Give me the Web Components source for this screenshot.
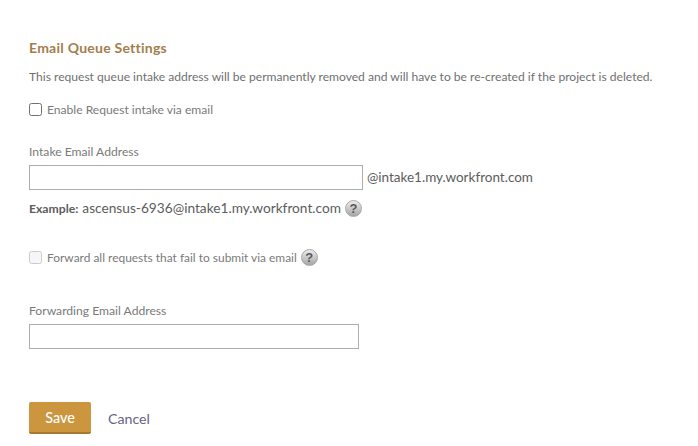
<!DOCTYPE html>
<html>
<head>
<meta charset="utf-8">
<title>Email Queue Settings</title>
<style>
  html, body { margin: 0; background: #fff; }
  body { font-family: Lato, "Open Sans", sans-serif; color: #666; }
</style>
</head>
<body>
<queue-settings>
  <settings-check slot="intake" style="margin-bottom:29px">Enable Request intake via email</settings-check>
</queue-settings>

<script>
// small round help badge
class HelpIcon extends HTMLElement {
  constructor() {
    super();
    this.attachShadow({ mode: "open" }).innerHTML = `
    <style>
      :host { display: block; width: 17px; height: 17px; flex: none; }
      .badge {
        width: 17px; height: 17px; box-sizing: border-box; border-radius: 50%;
        border: 1px solid #a8a8a8; background: linear-gradient(#ececec, #a6a6a6);
        display: flex; align-items: center; justify-content: center;
        font: 700 13px/1 "Liberation Sans", sans-serif; color: #5a5a5a;
      }
    </style>
    <div class="badge">?</div>`;
  }
}
customElements.define("help-icon", HelpIcon);

// checkbox + label row
class SettingsCheck extends HTMLElement {
  constructor() {
    super();
    const disabled = this.hasAttribute("disabled");
    this.attachShadow({ mode: "open" }).innerHTML = `
    <style>
      :host { display: flex; align-items: center; height: 14px; font-size: 12.1px; color: #7a7a7a; }
      .box {
        width: 13px; height: 13px; box-sizing: border-box; margin-right: 5px; flex: none;
        border: 1px solid ${disabled ? "#ccc" : "#707070"};
        border-radius: 2.5px; background: ${disabled ? "#f6f6f6" : "#fff"};
      }
      span { white-space: nowrap; }
    </style>
    <div class="box"></div><span><slot></slot></span><slot name="after"></slot>`;
  }
}
customElements.define("settings-check", SettingsCheck);

// label above a plain text field
class FieldLabel extends HTMLElement {
  constructor() {
    super();
    this.attachShadow({ mode: "open" }).innerHTML = `
    <style>
      :host { display: block; font-size: 12.15px; line-height: 14px; color: #7a7a7a; margin-bottom: 6px; }
    </style>
    <slot></slot>`;
  }
}
customElements.define("field-label", FieldLabel);

class TextField extends HTMLElement {
  constructor() {
    super();
    const w = this.getAttribute("width") || 330;
    this.attachShadow({ mode: "open" }).innerHTML = `
    <style>
      :host { display: block; flex: none; width: ${w}px; height: 25px; box-sizing: border-box;
        border: 1px solid #adadad; background: #fff; }
    </style>`;
  }
}
customElements.define("text-field", TextField);

class SaveBar extends HTMLElement {
  constructor() {
    super();
    this.attachShadow({ mode: "open" }).innerHTML = `
    <style>
      :host { display: flex; align-items: center; height: 32px; }
      .save {
        width: 62px; height: 32px; box-sizing: border-box; border-bottom: 2px solid #a67a2e;
        border-radius: 2px; background: #cc963f; color: #fff; font-size: 14.4px; font-weight: 500;
        display: flex; align-items: center; justify-content: center; margin-right: 17px;
      }
      .cancel { font-size: 14.2px; color: #666383; }
    </style>
    <div class="save">Save</div><div class="cancel">Cancel</div>`;
  }
}
customElements.define("save-bar", SaveBar);

class QueueSettings extends HTMLElement {
  constructor() {
    super();
    this.attachShadow({ mode: "open" }).innerHTML = `
    <style>
      :host { display: block; padding: 40px 0 0 29px; height: 406px; }
      h2 { margin: 0 0 15px; font-size: 14px; letter-spacing: .25px; line-height: 15px; font-weight: 700; color: #a37e4c; }
      p { margin: 0 0 18px; font-size: 12.08px; line-height: 14px; color: #707070; white-space: nowrap; }
      .row { display: flex; align-items: center; }
      .suffix { margin-left: 4px; padding-bottom: 2px; font-size: 13.5px; color: #5c5c5c; }
      .example { height: 18px; margin-top: 9px; font-size: 13.7px; color: #5c5c5c; }
      .example b { font-size: 12.2px; margin-right: 4px; }
      .example span { white-space: nowrap; padding-bottom: 1px; }
      .example help-icon { margin-left: 4px; }
      .forward { margin: 33px 0 40px; font-size: 11.95px; }
      .actions { margin-top: 53px; }
    </style>
    <h2>Email Queue Settings</h2>
    <p>This request queue intake address will be permanently removed and will have to be re-created if the project is deleted.</p>
    <slot name="intake"></slot>
    <field-label>Intake Email Address</field-label>
    <div class="row">
      <text-field width="334"></text-field>
      <span class="suffix">@intake1.my.workfront.com</span>
    </div>
    <div class="row example"><b>Example:</b><span>ascensus-6936@intake1.my.workfront.com</span><help-icon></help-icon></div>
    <settings-check class="forward" disabled>Forward all requests that fail to submit via email<help-icon slot="after" style="margin-left:4px"></help-icon></settings-check>
    <field-label>Forwarding Email Address</field-label>
    <text-field width="330"></text-field>
    <save-bar class="actions"></save-bar>`;
  }
}
customElements.define("queue-settings", QueueSettings);
</script>
</body>
</html>
